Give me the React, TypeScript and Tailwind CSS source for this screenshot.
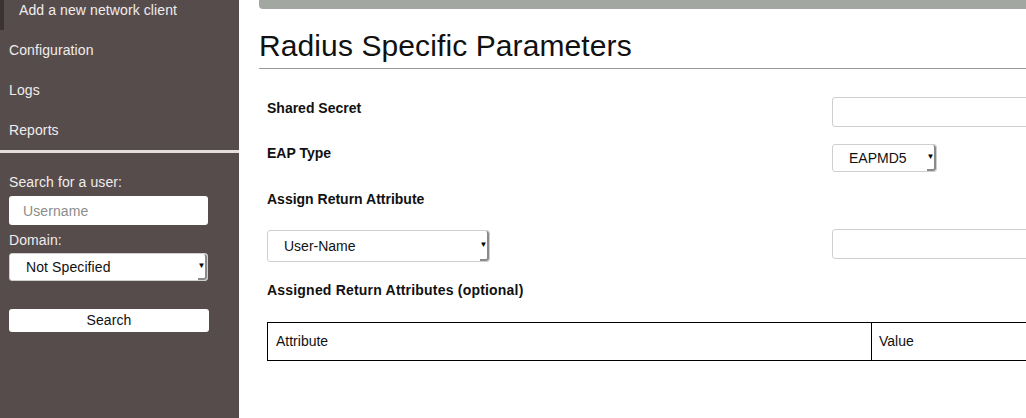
import React from 'react';

const FONT = { fontFamily: '"Liberation Sans", Arial, sans-serif' };

function Select({ value, className }: { value: string; className: string }) {
  return (
    <div
      className={`flex items-center justify-between rounded-[3px] border border-[#cfcfcf] bg-white text-[14px] text-[#111] ${className}`}
    >
      <span className="pl-4">{value}</span>
      <span className="flex h-full w-[9px] items-center justify-center rounded-r-[3px] border-r-2 border-b-2 border-[#8a8a8a] text-[8px] leading-none text-black">
        ▼
      </span>
    </div>
  );
}

function NavItem({ label, active }: { label: string; active?: boolean }) {
  return (
    <div className="flex h-[40px] items-center">
      {active ? (
        <div className="flex h-full items-center">
          <div className="h-full w-[4px] bg-[#3b3333]" />
          <span className="pl-[15px]">{label}</span>
        </div>
      ) : (
        <span className="pl-[9px]">{label}</span>
      )}
    </div>
  );
}

export default function App() {
  return (
    <div className="flex h-[418px] w-[1026px] overflow-hidden bg-white" style={FONT}>
      {/* Sidebar */}
      <aside className="flex w-[239px] shrink-0 flex-col bg-[#574c4c] text-[14px] tracking-[0.1px] text-[#f0ecec]">
        <nav className="mt-[-10px]">
          <NavItem label="Add a new network client" active />
          <NavItem label="Configuration" />
          <NavItem label="Logs" />
          <NavItem label="Reports" />
        </nav>
        <div className="h-[3px] bg-[#e6dddd]" />
        <div className="flex flex-col px-[9px] pt-[19px]">
          <label className="mb-[3px]">Search for a user:</label>
          <input
            placeholder="Username"
            className="h-[29px] w-[199px] rounded-[3px] bg-white px-[14px] text-[14px] text-[#333] placeholder:text-[#8c8c8c] outline-none"
          />
          <label className="mt-[5px] mb-[2px]">Domain:</label>
          <Select value="Not Specified" className="h-[28px] w-[199px]" />
          <button className="mt-[28px] h-[23px] w-[200px] rounded-[3px] bg-white text-[14px] text-[#111]">
            Search
          </button>
        </div>
      </aside>

      {/* Main */}
      <main className="flex min-w-0 flex-1 flex-col pl-[20px]">
        <div className="h-[9px] rounded-bl-[4px] bg-[#a2a8a1]" />
        <h1 className="mt-[20px] text-[30px] leading-[34px] tracking-[0.1px] text-[#111]">Radius Specific Parameters</h1>
        <div className="mt-[5px] h-[1px] bg-[#9a9a9a]" />

        <div className="pl-[8px] pt-[28px] text-[14px] text-[#111]">
          <div className="flex items-start">
            <span className="mt-[1px] w-[565px] shrink-0 font-bold">Shared Secret</span>
            <div className="h-[30px] w-[260px] shrink-0 rounded-[3px] border border-[#cfcfcf] bg-white" />
          </div>
          <div className="mt-[17px] flex items-start">
            <span className="mt-[-1px] w-[565px] shrink-0 font-bold">EAP Type</span>
            <Select value="EAPMD5" className="h-[28px] w-[105px] shrink-0" />
          </div>
          <div className="mt-[17px] font-bold">Assign Return Attribute</div>
          <div className="mt-[20px] flex items-start">
            <div className="w-[565px] shrink-0">
              <Select value="User-Name" className="h-[32px] w-[223px]" />
            </div>
            <div className="mt-[-1px] h-[30px] w-[260px] shrink-0 rounded-[3px] border border-[#cfcfcf] bg-white" />
          </div>
          <div className="mt-[18px] font-bold tracking-[0.2px]">Assigned Return Attributes (optional)</div>
          <table className="mt-[21px] w-[820px] border-collapse">
            <thead>
              <tr className="h-[38px]">
                <th className="w-[604px] border border-black pl-[8px] text-left font-normal">Attribute</th>
                <th className="border border-black pl-[7px] text-left font-normal">Value</th>
              </tr>
            </thead>
          </table>
        </div>
      </main>
    </div>
  );
}
